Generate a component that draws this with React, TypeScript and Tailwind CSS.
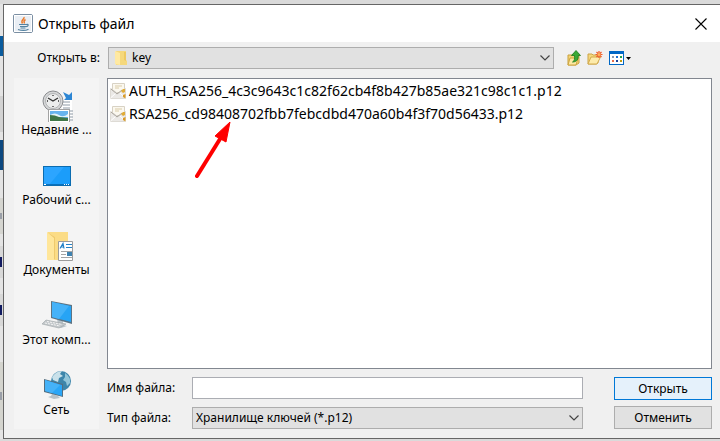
import React, { useState } from 'react';
import clsx from 'clsx';

type IconProps = { className?: string };

const JavaIcon = ({ className }: IconProps) => (
  <svg viewBox="0 0 20 20" className={className} aria-hidden="true">
    <rect x="0.5" y="0.5" width="19" height="18" rx="1.5" fill="#e9eef4" stroke="#7b8fa3" />
    <rect x="1.5" y="1.5" width="17" height="16" fill="none" stroke="#fff" />
    <path d="M11 3c1 2-4 3-1.500 6.500M12.500 5.500c-2 1-2 2-1 4" fill="none" stroke="#ea7a2c" strokeWidth="1.400" />
    <path d="M6 10.500h7.500M7 12.500h6M13.500 10.500c2.500-.5 2 2-.5 2.200M7.500 14h5" fill="none" stroke="#5382a1" strokeWidth="1.200" />
    <path d="M5 15.500c3 1 8 1 10.500-.3" fill="none" stroke="#5382a1" strokeWidth="1.200" />
  </svg>
);

const FolderIcon = ({ className }: IconProps) => (
  <svg viewBox="0 0 14 16" className={className} aria-hidden="true">
    <path d="M2 1h10v9l1 1v4H2z" fill="#f5d87c" />
    <path d="M1 1l5 2v12l-5-1z" fill="#ffe9a2" />
    <path d="M10 2v8l2 1V2z" fill="#edc962" />
  </svg>
);

const CertIcon = ({ className }: IconProps) => (
  <svg viewBox="0 0 16 16" className={className} aria-hidden="true">
    <path d="M2.500.5h12v9h-12z" fill="#fbf8ef" stroke="#d8d2c4" />
    <path d="M5 3h7M5 5h4" stroke="#d9cba8" />
    <path d="M.5 5.500L8 10.500l7.500-5v10H.5z" fill="#ebe9e6" stroke="#dedbd5" />
    <path d="M.5 15l5.500-5M15.500 15L10 10" stroke="#fff" />
    <path d="M1 6l6 5 5-4" fill="none" stroke="#a9a49b" />
    <path d="M11 8l2-2h2v3l-2 1z" fill="#e0ac38" />
    <path d="M13 12l2.500-1v4.500L13 14z" fill="#d99b28" />
  </svg>
);

const UpFolderIcon = ({ className }: IconProps) => (
  <svg viewBox="0 0 14 16" className={className} aria-hidden="true">
    <path d="M1 5h4l1-1h6v9l-3 2H1z" fill="#f3d477" stroke="#c9a03d" />
    <path d="M1 15l2-7h8l-2 7z" fill="#fde9a3" stroke="#cda43f" />
    <path d="M5.500 12C8 11 7.500 8 7.500 5.500H4.500L9 .5l4.500 5h-2.300C11.500 9 10 12 5.500 12z" fill="#39a935" stroke="#187a1c" strokeWidth=".8" />
  </svg>
);

const NewFolderIcon = ({ className }: IconProps) => (
  <svg viewBox="0 0 16 14" className={className} aria-hidden="true">
    <path d="M1 3h4l1 1h5v8l-2 1H1z" fill="#f5d87f" stroke="#cda448" />
    <path d="M1 13l3-7h9.500l-3.500 7z" fill="#fdebab" stroke="#d2aa4c" />
    <path d="M12 0v7M8.500 3.500h7M9.500 1l5 5M14.500 1l-5 5" stroke="#ef5a28" strokeWidth="1.200" />
    <circle cx="12" cy="3.500" r="1.500" fill="#ffb25c" />
  </svg>
);

const ViewIcon = ({ className }: IconProps) => (
  <svg viewBox="0 0 22 14" className={className} aria-hidden="true">
    <rect x=".5" y=".5" width="14" height="13" fill="#fff" stroke="#0067c5" />
    <path d="M0 0h15v3H0z" fill="#0067c5" />
    <path d="M3 5h2v2H3z" fill="#8b9bb0" />
    <path d="M7 5h2v2H7z" fill="#1d6fd0" />
    <path d="M11 5h2v2h-2z" fill="#22a04a" />
    <path d="M3 9h2v2H3z" fill="#e86c4a" />
    <path d="M7 9h2v2H7z" fill="#1c3f96" />
    <path d="M11 9h2v2h-2z" fill="#c09a10" />
    <path d="M17 6h5l-2.500 3z" fill="#000" />
  </svg>
);

const RecentIcon = ({ className }: IconProps) => (
  <svg viewBox="0 0 32 32" className={className} aria-hidden="true">
    <path d="M21 9h10v22H21z" fill="#fff" />
    <path d="M22 12h7M22 15h7M22 18h7M29 21h3M29 24h3M29 27h3M29 30h3" stroke="#8e9aa6" />
    <path d="M22 2l4 2 2 1 3-3v8h-8l2-2z" fill="#2d86d4" />
    <circle cx="12" cy="11" r="10" fill="#d5d6d7" stroke="#8b8d90" />
    <circle cx="12" cy="11" r="7.500" fill="#eceded" stroke="#b2b4b6" />
    <path d="M12 5v1M12 16v1M6 11h1M17 11h1M7 8l5 3 5-3" fill="none" stroke="#333" strokeWidth="1.300" />
    <rect x="7.500" y="19.500" width="21" height="13" fill="#fff" stroke="#a3a3a3" />
    <path d="M9 21h18v10H9z" fill="#68b4ee" />
    <path d="M9 25q5-3 9 0t9-1v3H9z" fill="#e6f3f6" />
    <path d="M9 25q5 0 9 2l9 1v3H9z" fill="#3f7648" />
  </svg>
);

const DesktopIcon = ({ className }: IconProps) => (
  <svg viewBox="0 0 32 32" className={className} aria-hidden="true">
    <rect x="2.500" y="6.500" width="27" height="19" fill="#1b9dfa" stroke="#0b6cb0" />
    <path d="M3 7h20L8 25H3z" fill="#2ca5ff" />
    <path d="M3 24.500h26" stroke="#0870bd" />
    <path d="M3 24.500h2M23 24.500h1M25 24.500h1M27 24.500h1" stroke="#fff" />
  </svg>
);

const DocumentsIcon = ({ className }: IconProps) => (
  <svg viewBox="0 0 32 32" className={className} aria-hidden="true">
    <path d="M7 2h20v28H7z" fill="#fbdc86" />
    <path d="M6 2l8 5v23H6z" fill="#ffe69a" />
    <path d="M6 2l8 5v23l-1-1V8z" fill="#efca6c" />
    <path d="M17.500 11.500h14v19h-14z" fill="#fff" stroke="#9b9b9b" />
    <path d="M19 18.500l3-5 1 5M20 17h3M25 14.500h6M25 17.500h6" fill="none" stroke="#2382c8" strokeWidth="1.200" />
    <path d="M20 21.500h11M20 24.500h5M20 27.500h11" stroke="#a5a5a5" />
    <path d="M26 22h5v4h-5z" fill="#3e82b0" />
  </svg>
);

const ComputerIcon = ({ className }: IconProps) => (
  <svg viewBox="0 0 32 32" className={className} aria-hidden="true">
    <path d="M16 19l6 2v4l4 1-6 2-5-2 2-1z" fill="#b9c2c8" />
    <path d="M10 1l21 4v19l-21-6z" fill="#5d7484" />
    <path d="M11 2l19 4v16l-19-5z" fill="#27a4f5" />
    <path d="M11 2l17 4-10 13-7-2z" fill="#45b2f8" />
    <path d="M5 20l20 4-7 4L1 24z" fill="#c2c7ca" stroke="#9da4a8" strokeWidth=".6" />
    <path d="M6 21.500l15 3M4 23l15 3" stroke="#f5f5f5" strokeDasharray="2 1" />
  </svg>
);

const NetworkIcon = ({ className }: IconProps) => (
  <svg viewBox="0 0 32 32" className={className} aria-hidden="true">
    <circle cx="20" cy="11" r="10" fill="#3d86ab" />
    <path d="M11 7q4-6 10-6l-2 3 3 2-4 2-1 4-5-2z" fill="#c9e1ea" />
    <path d="M24 3q6 4 5 10l-3 3-1-4-3-2 2-3z" fill="#93c6d9" />
    <path d="M11 24l6 2 2 2-6 1-6-2 3-1z" fill="#b8c2c8" />
    <path d="M3 9l19 5v13L3 22z" fill="#546e7f" />
    <path d="M4 10l17 5v11L4 21z" fill="#2aa6f7" />
    <path d="M4 10l15 5-8 8-7-2z" fill="#45b2f8" />
  </svg>
);

const Chevron = ({ className }: IconProps) => (
  <svg viewBox="0 0 10 6" className={className} aria-hidden="true">
    <path d="M.5.5L5 5 9.500.5" fill="none" stroke="#444" strokeWidth="1.200" />
  </svg>
);

const places = [
  { label: 'Недавние ...', Icon: RecentIcon },
  { label: 'Рабочий с...', Icon: DesktopIcon },
  { label: 'Документы', Icon: DocumentsIcon },
  { label: 'Этот комп...', Icon: ComputerIcon },
  { label: 'Сеть', Icon: NetworkIcon },
];

const files = [
  'AUTH_RSA256_4c3c9643c1c82f62cb4f8b427b85ae321c98c1c1.p12',
  'RSA256_cd98408702fbb7febcdbd470a60b4f3f70d56433.p12',
];

// The page behind the dialog, peeking out at its left edge
const PageEdge = () => (
  <div className="flex w-[3px] shrink-0 flex-col bg-[#e4e4e4]" aria-hidden="true">
    <div className="h-8 shrink-0" />
    <div className="h-5 shrink-0 bg-[#0b5c9e]" />
    <div className="h-10 shrink-0" />
    <div className="h-9 shrink-0 bg-[#d2d2d2]" />
    <div className="h-2 shrink-0" />
    <div className="h-[30px] shrink-0 bg-[#0c4880]" />
    <div className="h-7 shrink-0" />
    <div className="flex h-9 shrink-0 items-center bg-[#d5d5d0]">
      <div className="h-1.5 w-0.5 bg-[#9a9fa8]" />
    </div>
    <div className="h-3 shrink-0" />
    <div className="flex h-8 shrink-0 items-center bg-[#d8d8d8]">
      <div className="h-2.5 w-0.5 bg-[#111a60]" />
    </div>
    <div className="h-4 shrink-0" />
    <div className="flex h-8 shrink-0 items-center bg-[#d8d8d8]">
      <div className="h-2.5 w-0.5 bg-[#111a60]" />
    </div>
    <div className="h-9 shrink-0" />
    <div className="flex h-[68px] shrink-0 items-center bg-[#d4d4ce]">
      <div className="h-2 w-0.5 bg-[#9a9fa8]" />
    </div>
  </div>
);

export default function App() {
  const [fileName, setFileName] = useState('');

  return (
    <div className="flex min-h-screen bg-[#dadada] pt-1 pb-0.5 font-['Noto_Sans',sans-serif] text-xs text-black">
      <PageEdge />

      <div role="dialog" aria-labelledby="dialog-title" className="flex min-w-0 flex-1 flex-col border-y border-l border-[#666] bg-[#f0f0f0]">
        <header className="flex h-[37px] shrink-0 items-center bg-white pr-3 pl-[9px]">
          <JavaIcon className="size-5" />
          <h1 id="dialog-title" className="ml-[5px] flex-1 text-sm">Открыть файл</h1>
          <button type="button" aria-label="Закрыть" className="p-px">
            <svg viewBox="0 0 12 12" className="size-3">
              <path d="M.5.5l11 11M11.500.5l-11 11" stroke="#000" strokeWidth="1.100" />
            </svg>
          </button>
        </header>

        <div className="flex h-9 shrink-0 items-center pb-1">
          <label htmlFor="folder" className="w-[104px] shrink-0 pr-2 text-right">Открыть в:</label>
          <div className="relative mr-[13px] min-w-0 flex-1">
            <select id="folder" className="block h-[22px] w-full appearance-none border border-[#adadad] bg-[#e1e1e1] pl-[23px]">
              <option>key</option>
            </select>
            <FolderIcon className="pointer-events-none absolute top-[3px] left-1.5 h-4 w-3.5" />
            <Chevron className="pointer-events-none absolute top-2 right-1 h-1.5 w-2.5" />
          </div>
          <div className="flex w-[153px] shrink-0 items-center gap-1.5">
            <button type="button" aria-label="Вверх"><UpFolderIcon className="h-4 w-3.5" /></button>
            <button type="button" aria-label="Новая папка"><NewFolderIcon className="h-3.5 w-4" /></button>
            <button type="button" aria-label="Вид"><ViewIcon className="h-3.5 w-[22px]" /></button>
          </div>
        </div>

        <div className="flex flex-1 pr-2 pb-[9px] pl-2.5">
          <nav className="mr-2 flex w-[85px] shrink-0 flex-col gap-[22px] bg-[#f4f4f4] pt-3 pb-[11px]">
            {places.map(({ label, Icon }) => (
              <button key={label} type="button" className="flex flex-col items-center">
                <Icon className="size-8" />
                <span className="leading-4">{label}</span>
              </button>
            ))}
          </nav>

          <div className="flex min-w-0 flex-1 flex-col">
            <div className="relative flex-1 border border-[#828790] bg-white pl-0.5">
              <ul className="text-sm">
                {files.map((name) => (
                  <li key={name} className="flex h-[23px] items-center gap-[3px]">
                    <CertIcon className="size-4 shrink-0" />
                    <span className="whitespace-nowrap">{name}</span>
                  </li>
                ))}
              </ul>
              <svg viewBox="0 0 36 56" className="pointer-events-none absolute top-[43px] left-[87px] h-14 w-9" aria-hidden="true">
                <path d="M2 54L25 17" stroke="#fe0000" strokeWidth="4" strokeLinecap="round" />
                <path d="M35 0L20 14l11 6z" fill="#fe0000" stroke="#fe0000" />
              </svg>
            </div>

            <form className="flex pt-2" onSubmit={(e) => e.preventDefault()}>
              <div className="flex min-w-0 flex-1 flex-col gap-2">
                <div className="flex items-center">
                  <label htmlFor="name" className="w-[85px] shrink-0">Имя файла:</label>
                  <input
                    id="name"
                    value={fileName}
                    onChange={(e) => setFileName(e.target.value)}
                    className="h-[22px] min-w-0 flex-1 border border-[#abadb3] bg-white px-1"
                  />
                </div>
                <div className="flex items-center">
                  <label htmlFor="type" className="w-[85px] shrink-0">Тип файла:</label>
                  <div className="relative min-w-0 flex-1">
                    <select id="type" className="block h-[22px] w-full appearance-none border border-[#adadad] bg-[#e1e1e1] pl-[3px]">
                      <option>Хранилище ключей (*.p12)</option>
                    </select>
                    <Chevron className="pointer-events-none absolute top-2 right-1 h-1.5 w-2.5" />
                  </div>
                </div>
              </div>
              <div className="ml-[31px] flex w-[98px] shrink-0 flex-col gap-1.5">
                {['Открыть', 'Отменить'].map((label, i) => (
                  <button
                    key={label}
                    type="button"
                    className={clsx('h-[23px] border', i === 0 ? 'border-[#0078d7] bg-[#e5f1fb]' : 'border-[#adadad] bg-[#e1e1e1]')}
                  >
                    {label}
                  </button>
                ))}
              </div>
            </form>
          </div>
        </div>
      </div>
    </div>
  );
}
